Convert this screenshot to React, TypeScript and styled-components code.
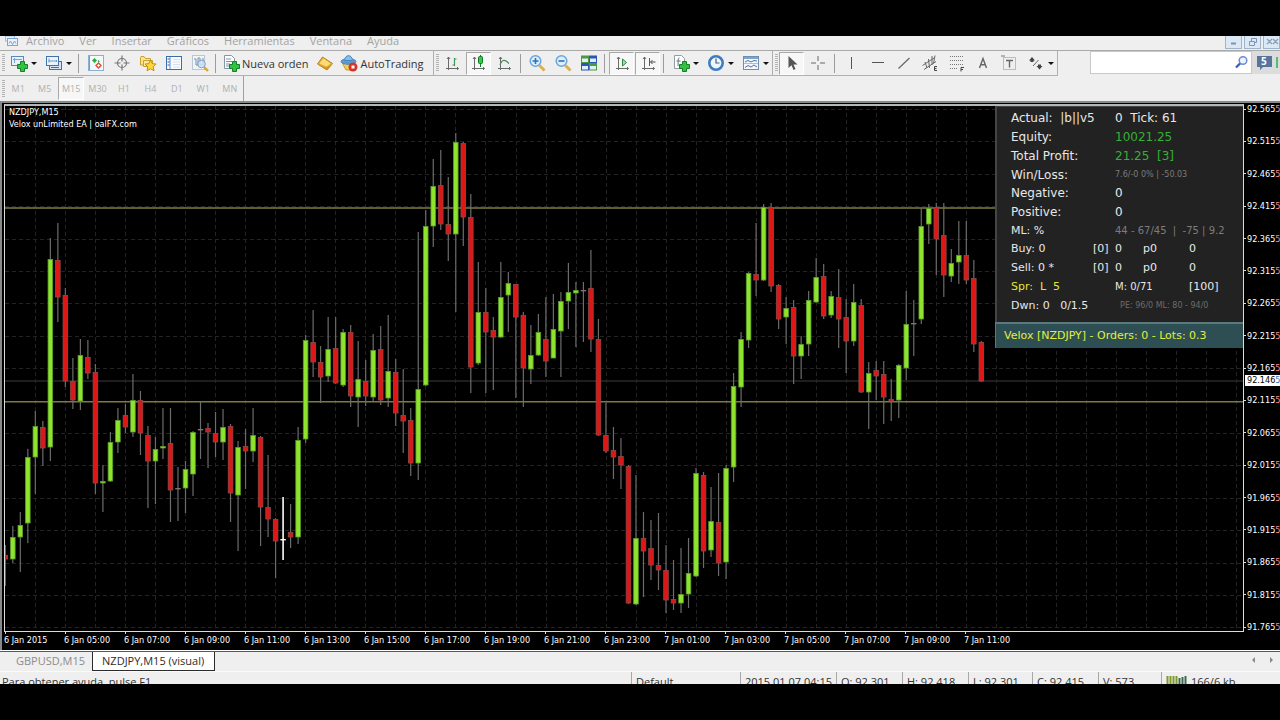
import React from "react";
import styled, { createGlobalStyle, css } from "styled-components";

const ui = '"Open Sans", "Noto Sans", sans-serif';
const tahoma = '"DejaVu Sans Condensed", "Open Sans", sans-serif';
const verdana = '"DejaVu Sans", sans-serif';

const GlobalStyle = createGlobalStyle`
  * { box-sizing: border-box; }
  body { margin: 0; background: #000; font-family: ${ui}; font-size: 11px; color: #333; }
  button { font: inherit; color: inherit; }
`;

const Screen = styled.div`
  padding: 36px 0;
  background: #000;
  min-height: 100vh;
  overflow: hidden;
`;

const Terminal = styled.main`
  display: flex;
  flex-direction: column;
  background: #efefef;
`;

/* ---------- menu ---------- */

const MenuBar = styled.header`
  display: flex;
  align-items: flex-start;
  justify-content: space-between;
  height: 15px;
  border-bottom: 1px solid #a9a9a9;
`;

const MenuList = styled.nav`
  display: flex;
  gap: 15px;
  padding-left: 4px;
`;

const MenuLink = styled.a`
  color: #a3a3a3;
  line-height: 10px;
  text-decoration: none;
`;

const MenuLogo = styled.svg`
  width: 16px;
  height: 12px;
  margin-right: -9px;
`;

const WindowButtons = styled.div`
  display: flex;
  gap: 2px;
`;

const WindowButton = styled.button`
  display: flex;
  justify-content: center;
  width: 17px;
  height: 13px;
  padding: 0;
  border: 1px solid #9db4cc;
  border-top: 0;
  background: #dbe8f5;
`;

/* ---------- toolbars ---------- */

const Toolbar = styled.div`
  display: flex;
  height: 25px;
`;

const ToolGroup = styled.div<{ $min: number; $packed?: boolean }>`
  display: flex;
  align-items: center;
  justify-content: ${(p) => (p.$packed ? "flex-start" : "space-between")};
  gap: ${(p) => (p.$packed ? 1 : 0)}px;
  min-width: ${(p) => p.$min}px;
  height: 25px;
  padding: 0 0 0 2px;
  border-right: 1px solid #b0b0b0;
  border-bottom: 1px solid #b0b0b0;
`;

const Grip = styled.span`
  width: 3px;
  height: 18px;
  background: repeating-linear-gradient(#b4b4b4 0 1px, #efefef 1px 2px);
`;

const Divider = styled.span`
  width: 1px;
  height: 19px;
  margin: 0 3px 0 2px;
  background: #9c9c9c;
`;

const pressedLook = css`
  border-color: #a8a8a8 #fff #fff #a8a8a8;
  background: #f7f7f7;
`;

const ToolButton = styled.button<{ $pressed?: boolean }>`
  display: flex;
  align-items: center;
  justify-content: center;
  width: 25px;
  height: 23px;
  padding: 0;
  border: 1px solid transparent;
  background: transparent;
  ${(p) => p.$pressed && pressedLook}
`;

const DropButton = styled(ToolButton)`
  width: 34px;
  justify-content: flex-start;
  gap: 3px;
  padding-left: 3px;
`;

const Caret = styled.span`
  border: 3px solid transparent;
  border-top-color: #111;
  border-bottom: 0;
`;

const TextButton = styled(ToolButton)`
  width: auto;
  gap: 2px;
  padding: 0 2px 0 1px;
  white-space: nowrap;
`;

const IconSvg = styled.svg`
  width: 18px;
  height: 18px;
  flex: none;
`;

const SearchArea = styled.form`
  display: flex;
  margin-left: auto;
  height: 24px;
`;

const SearchBox = styled.label`
  display: flex;
  align-items: center;
  width: 162px;
  height: 23px;
  border: 1px solid #c9c9c9;
  background: #fff;
`;

const SearchInput = styled.input`
  flex: 1;
  min-width: 0;
  border: 0;
  outline: 0;
  background: transparent;
  font: 11px ${ui};
`;

const ChatButton = styled.button`
  width: 28px;
  height: 23px;
  padding: 0;
  border: 0;
  background: #dcdcdc;
`;

const PeriodBar = styled.div`
  display: flex;
  width: 244px;
  height: 25px;
  align-items: center;
  padding-left: 2px;
  border-right: 1px solid #a0a0a0;
`;

const PeriodButton = styled.button<{ $pressed?: boolean }>`
  flex: 1;
  height: 23px;
  padding: 0;
  border: 1px solid transparent;
  background: transparent;
  color: #b0b0b0;
  font-size: 9px;
  ${(p) => p.$pressed && pressedLook}
`;

/* ---------- chart ---------- */

const ChartWindow = styled.section`
  padding: 1px 0 0 2px;
  border: solid #858989;
  border-width: 2px 0 0 2px;
  background: #000;
  color: #fff;
  font-family: ${tahoma};
  font-size: 9px;
  overflow: hidden;
`;

const ChartBody = styled.div`
  display: flex;
`;

const Plot = styled.div`
  position: relative;
  flex: 1;
  min-width: 0;
  border: 1px solid #dcdcdc;
  border-top: 2px solid #b4b8b8;
  overflow: hidden;
`;

const PlotSvg = styled.svg`
  display: block;
  width: 100%;
  height: 525px;
`;

const ChartTitle = styled.div`
  position: absolute;
  top: 0;
  left: 4px;
  line-height: 12px;
`;

const PriceAxis = styled.div`
  position: relative;
  display: flex;
  flex-direction: column;
  justify-content: space-between;
  width: 36px;
`;

const Price = styled.span`
  display: flex;
  align-items: center;
  line-height: 10px;
  white-space: nowrap;
  &::before {
    content: "";
    flex: none;
    width: 2px;
    height: 1px;
    margin-right: 1px;
    background: #ddd;
  }
`;

const LastDigit = styled.span`
  color: #ff8c8c;
`;

const CurrentPrice = styled.span`
  position: absolute;
  top: 271px;
  left: 1px;
  width: 35px;
  padding-left: 2px;
  background: #fff;
  color: #000;
  line-height: 11px;
  white-space: nowrap;
`;

const CurrentDigit = styled.span`
  color: #4a6fb0;
`;

const TimeAxis = styled.div`
  display: flex;
  height: 18px;
`;

const TimeLabel = styled.span`
  flex: none;
  width: 60px;
  line-height: 12px;
  white-space: nowrap;
  &::before {
    content: "";
    display: block;
    width: 1px;
    height: 2px;
    margin-left: 1px;
    background: #ddd;
  }
`;

/* ---------- advisor panel ---------- */

const Advisor = styled.aside`
  position: absolute;
  top: 0;
  right: 0;
  width: 248px;
  font-family: ${verdana};
  color: #e8e8e8;
`;

const Stats = styled.div`
  display: grid;
  grid-template-rows: repeat(11, 1fr);
  height: 216px;
  padding: 2px 0 7px 14px;
  border: solid #454545;
  border-width: 1px 0 0 2px;
  background: #222;
`;

const StatRow = styled.div<{ $small?: boolean }>`
  display: grid;
  grid-template-columns: 82px 22px 28px 46px 1fr;
  align-items: center;
  font-size: ${(p) => (p.$small ? 11 : 12)}px;
  line-height: 14px;
  white-space: pre;
`;

const Wide = styled.span<{ $tone?: string; $size?: number }>`
  grid-column: 3 / -1;
  color: ${(p) => p.$tone || "inherit"};
  font-size: ${(p) => (p.$size ? `${p.$size}px` : "inherit")};
`;

const Margin = styled.span`
  grid-column: 3 / 5;
  font-size: 10px;
`;

const Spread = styled.span`
  grid-column: 1 / 3;
  color: #e6e62e;
`;

const Summary = styled.div`
  height: 26px;
  padding-left: 8px;
  border: solid #5b7a7e;
  border-width: 2px 0 0 1px;
  background: #2d4e53;
  color: #e3ee3c;
  font-size: 11px;
  line-height: 24px;
  white-space: nowrap;
`;

/* ---------- tabs and status ---------- */

const Tabs = styled.nav`
  display: flex;
  align-items: flex-start;
  height: 22px;
  border-top: 1px solid #fff;
  border-bottom: 1px solid #fafafa;
  box-shadow: inset 0 1px 0 #5a5a5a;
  padding-left: 1px;
`;

const Tab = styled.button<{ $active?: boolean }>`
  height: 19px;
  margin-top: 1px;
  padding: 0 10px 0 9px;
  border: solid ${(p) => (p.$active ? "#2b2b2b" : "transparent")};
  border-width: 0 1px 1px 1px;
  background: ${(p) => (p.$active ? "#fff" : "transparent")};
  color: ${(p) => (p.$active ? "#2b2b2b" : "#8c8c8c")};
  line-height: 16px;
  &:first-child { padding: 0 6px 0 14px; }
`;

const TabScroll = styled.div`
  display: flex;
  gap: 15px;
  margin: 6px 7px 0 auto;
`;

const Arrow = styled.button<{ $dir: "left" | "right" }>`
  width: 0;
  height: 0;
  padding: 0;
  border: 3px solid transparent;
  border-${(p) => (p.$dir === "left" ? "right" : "left")}-color: #8a8a8a;
  border-${(p) => p.$dir}-width: 0;
  background: none;
`;

const StatusBar = styled.footer`
  display: flex;
  height: 12px;
  overflow: hidden;
  line-height: 20px;
  white-space: nowrap;
`;

const Hint = styled.span`
  flex: 1;
  padding-left: 2px;
`;

const Cell = styled.span<{ $w: number }>`
  width: ${(p) => p.$w}px;
  height: 20px;
  padding-left: 4px;
  border-left: 1px solid #a8a8a8;
`;

const Traffic = styled.svg`
  width: 22px;
  height: 10px;
  margin: 4px 3px 0 0;
  vertical-align: top;
`;

/* ---------- icons ---------- */

const Plus = () => (
  <path
    transform="translate(7 7)"
    d="M3.500 0.500h4v3h3v4h-3v3h-4v-3h-3v-4h3z"
    fill="#2fc43a"
    stroke="#13802a"
  />
);

const Axes = () => (
  <path
    d="M5.500 3v13M3 14.500H15.500M4 5l1.500-2L7 5M14 13l1.500 1.500L14 16"
    fill="none"
    stroke="#6a6a6a"
  />
);

const icons: Record<string, React.ReactNode> = {
  newChart: (
    <>
      <rect x="1.500" y="2.500" width="12" height="9" fill="#e6f1fb" stroke="#5a8ab8" />
      <path d="M3 5.500h9M4.500 4v5" stroke="#7ba3cc" />
      <Plus />
    </>
  ),
  profiles: (
    <>
      <rect x="4.500" y="7.500" width="12" height="8" fill="#d4e5f6" stroke="#3f74aa" />
      <rect x="1.500" y="2.500" width="12" height="9" fill="#eaf3fc" stroke="#3f74aa" />
      <path d="M3.500 7h8M4 4.500v4M11 6l1 1-1 1" stroke="#6c98c4" fill="none" />
      <path d="M6 13.500h8" stroke="#3f74aa" />
    </>
  ),
  market: (
    <>
      <rect x="1.500" y="1.500" width="15" height="15" fill="#f4f9ff" stroke="#8ab0d8" />
      <path d="M2.500 2v14" stroke="#6b9bd0" />
      <path d="M7.500 4l2.500 2.500-2.500 2.500L5 6.500z" fill="#2cae3c" />
      <path d="M11.500 9l2.500 2.500-2.500 2.500L9 11.500z" fill="#fff" stroke="#e2482c" strokeWidth="1.300" />
      <path d="M11 6l2 1.200L11 8.500z" fill="#2cae3c" />
    </>
  ),
  target: (
    <g fill="none" stroke="#777" strokeWidth="1.200">
      <circle cx="9" cy="9" r="4.500" />
      <path d="M9 1.500v6M9 10.500v6M1.500 9h6M10.500 9h6" />
    </g>
  ),
  navigator: (
    <>
      <path d="M1.500 3.500V11h10V4.500h-5l-1.500-2h-3z" fill="#fbe48a" stroke="#c9a032" />
      <path d="M4.500 6.500h9v6h-9z" fill="#fdeb9c" stroke="#c9a032" />
      <path d="M11.500 6l1.700 3.600 3.900.5-2.900 2.700.8 3.900-3.500-1.900-3.500 1.900.8-3.900L6 10.100l3.900-.5z" fill="#ffd83a" stroke="#c08f1c" />
    </>
  ),
  terminal: (
    <>
      <rect x="1.500" y="2.500" width="15" height="13" fill="#f8fbff" stroke="#3a6ea8" />
      <path d="M5 3v12" stroke="#a9c5ea" strokeWidth="2" />
      <path d="M2.500 5h2M2.500 8h2M2.500 11h2" stroke="#2f5b96" />
      <path d="M8 5.500h7M8 8h7M8 10.500h7M8 13h7" stroke="#d3e1f2" />
    </>
  ),
  tester: (
    <>
      <rect x="1.500" y="1.500" width="12" height="14" fill="#f4f4f4" stroke="#b9c8d5" />
      <path d="M3 5h2v6h2V4h2v7h3V4" fill="none" stroke="#7292b4" />
      <path d="M13 13l4 4" stroke="#d8a33b" strokeWidth="2.400" />
      <circle cx="10.500" cy="10" r="3.800" fill="#cfe5f6" fillOpacity=".8" stroke="#7aa2c6" />
    </>
  ),
  order: (
    <>
      <path d="M2.500 1.500h7l3 3v10h-10z" fill="#fff" stroke="#8695a3" />
      <path d="M4 5h5M4 7.500h6M4 10h4M4 12h3" stroke="#7d8f9f" />
      <Plus />
    </>
  ),
  gold: (
    <>
      <path d="M1.500 10l5-7 10 6.500-5.500 6.500z" fill="#e9b12e" stroke="#b9821e" />
      <path d="M3.500 9.500l4-5L14.500 9.500 10.500 12.500z" fill="#fbdc76" />
      <path d="M1.500 10l9 3.500 6-4L11 16z" fill="#cf9323" />
    </>
  ),
  auto: (
    <>
      <path d="M2 8.500h13l-4 7.500H6z" fill="#f3cf58" stroke="#c79b33" />
      <ellipse cx="8.500" cy="7.500" rx="7.500" ry="2.800" fill="#5b9bd5" stroke="#4a87c0" />
      <path d="M4.500 6.500C5 0 12 0 12.500 6.500z" fill="#86bce8" stroke="#4a87c0" />
      <circle cx="13" cy="13" r="4.500" fill="#d3352a" />
      <rect x="11.500" y="11.500" width="3" height="3" fill="#fff" />
    </>
  ),
  bars: (
    <>
      <Axes />
      <path d="M11.500 4v8M11.500 5h2M9.500 11h2" stroke="#3f9a52" strokeWidth="1.200" fill="none" />
    </>
  ),
  candle: (
    <>
      <Axes />
      <path d="M11.500 1v12" stroke="#0e7a24" />
      <rect x="9.500" y="2.500" width="4" height="7" rx="1" fill="#37c94a" stroke="#0e7a24" />
    </>
  ),
  line: (
    <>
      <Axes />
      <path d="M5 11c2-6 5-6 9-1.500" stroke="#4d8d5d" strokeWidth="1.200" fill="none" />
    </>
  ),
  zoomIn: (
    <>
      <path d="M11.500 11.500l5 5" stroke="#dcb14c" strokeWidth="3" />
      <circle cx="7.500" cy="7" r="5.300" fill="#dceefb" stroke="#6ba5da" strokeWidth="1.500" />
      <path d="M4.500 7h6M7.500 4v6" stroke="#2b72b8" strokeWidth="1.600" />
    </>
  ),
  zoomOut: (
    <>
      <path d="M11.500 11.500l5 5" stroke="#dcb14c" strokeWidth="3" />
      <circle cx="7.500" cy="7" r="5.300" fill="#dceefb" stroke="#6ba5da" strokeWidth="1.500" />
      <path d="M4.500 7h6" stroke="#2b72b8" strokeWidth="1.600" />
    </>
  ),
  tile: (
    <>
      <rect x="1" y="1.500" width="8" height="7.500" fill="#4b9a3c" />
      <rect x="9" y="1.500" width="8" height="7.500" fill="#2a58b4" />
      <rect x="1" y="9" width="8" height="7.500" fill="#2a58b4" />
      <rect x="9" y="9" width="8" height="7.500" fill="#4b9a3c" />
      <path d="M2 4.500h6V8H2zM10 4.500h6V8h-6zM2 12h6v3.500H2zM10 12h6v3.500h-6z" fill="#dfeefa" />
    </>
  ),
  scroll: (
    <>
      <Axes />
      <path d="M9.500 5l4 3.500-4 3.500z" fill="#a9dcb2" stroke="#2b8a3e" />
    </>
  ),
  shift: (
    <>
      <Axes />
      <path d="M10.500 4v8" stroke="#5d5d5d" />
      <path d="M11.500 8h5M13.500 6l-2 2 2 2" stroke="#4d4d4d" fill="none" />
    </>
  ),
  indicators: (
    <>
      <path d="M2.500 1.500h7l3 3v10h-10z" fill="#fff" stroke="#8f9f9f" />
      <path d="M7.500 4c-2 0-1 3-1.500 8M4.500 7h4" stroke="#5d6d7d" fill="none" />
      <Plus />
    </>
  ),
  clock: (
    <>
      <circle cx="9" cy="9" r="6.700" fill="#eef6fd" stroke="#3f7dbf" strokeWidth="2.600" />
      <path d="M9 4.500V9h3.500" stroke="#44607c" fill="none" strokeWidth="1.200" />
    </>
  ),
  template: (
    <>
      <rect x="1.500" y="2.500" width="15" height="13" fill="#f2f8fe" stroke="#6d8fae" />
      <path d="M2 4h14" stroke="#7ba6d2" strokeWidth="2" />
      <path d="M2 9.500h14" stroke="#a9bfd4" />
      <path d="M3 8l3-1.500 3 1.500 3-1.500 3 .5M3 13.500l3-2 3 1.500 3-2 3 2" stroke="#56728e" fill="none" />
    </>
  ),
  pointer: <path d="M5.500 2v12l3-2.700 2 4.700 2-.9-2-4.600h4z" fill="#555" />,
  cross: <path d="M9 2v5M9 11v5M2 9h5M11 9h5" stroke="#666" />,
  vline: <path d="M8.500 3v12" stroke="#555" />,
  hline: <path d="M3 8.500h12" stroke="#555" />,
  trend: <path d="M3.500 14.500l11-10.500" stroke="#666" strokeWidth="1.200" />,
  channel: (
    <>
      <path d="M1.500 11.500L13 4M3 15.500L15 7.500M4 8l2 6M7.500 5l1 9M11 2l0 9M14 1.500l-1.500 8" stroke="#666" fill="none" />
      <path d="M16 12.500h-2.500v4H16M13.500 14.500h2" stroke="#444" fill="none" />
    </>
  ),
  fibo: (
    <>
      <path d="M2 2.500h14M2 6.500h14M2 10.500h14M2 14.500h8" stroke="#777" strokeDasharray="1 1" />
      <path d="M16 13.500h-3v4M13 15.500h2" stroke="#444" fill="none" />
    </>
  ),
  text: <path d="M5.500 14L9 4.500l3.500 9.500M6.500 10.800h5" stroke="#666" strokeWidth="1.400" fill="none" />,
  label: (
    <>
      <rect x="3.500" y="3.500" width="12" height="12" fill="none" stroke="#888" strokeDasharray="1 1" />
      <path d="M6 6.500h7M9.500 6.500v7" stroke="#666" strokeWidth="1.400" />
      <path d="M1 2h4" stroke="#777" />
    </>
  ),
  arrows: (
    <>
      <path d="M5 3l3 3.500H6.500V8h-3V6.500H2z" fill="#444" />
      <path d="M12.500 15.500l-3-3.500H11v-1.500h3V12h1.500z" fill="#444" />
      <path d="M6 12l5.500-6" stroke="#666" />
    </>
  ),
};

const Icon = ({ name }: { name: string }) => (
  <IconSvg viewBox="0 0 18 18" aria-hidden="true">
    {icons[name]}
  </IconSvg>
);

type ToolProps = { name: string; label: string; pressed?: boolean };

const Tool = ({ name, label, pressed }: ToolProps) => (
  <ToolButton type="button" aria-label={label} $pressed={pressed}>
    <Icon name={name} />
  </ToolButton>
);

const DropTool = ({ name, label }: ToolProps) => (
  <DropButton type="button" aria-label={label}>
    <Icon name={name} />
    <Caret />
  </DropButton>
);

/* ---------- data ---------- */

type Candle = [kind: string, high: number, top: number, bottom: number, low: number];

const TOP = 106;
const STEP = 7.508;

// Candles from left to right: u = up, d = down, n = unchanged, w = marked bar.
const candles: Candle[] = [
  ["d", 545, 555, 559, 586], ["u", 526, 537, 559, 563], ["u", 512, 525, 537, 572], ["u", 449, 457, 523, 543],
  ["u", 411, 426, 457, 494], ["d", 421, 427, 448, 466], ["u", 238, 259, 447, 461], ["d", 223, 260, 297, 322],
  ["d", 288, 295, 381, 387], ["d", 358, 381, 400, 409], ["u", 339, 355, 401, 410], ["d", 340, 357, 373, 379],
  ["d", 364, 372, 483, 494], ["u", 465, 481, 483, 512], ["u", 432, 442, 481, 482], ["u", 408, 420, 442, 453],
  ["d", 404, 415, 427, 433], ["u", 374, 400, 432, 437], ["d", 391, 400, 433, 455], ["d", 426, 435, 461, 508],
  ["u", 437, 449, 461, 504], ["u", 408, 446, 448, 459], ["d", 408, 443, 490, 522], ["n", 467, 488, 489, 521],
  ["u", 461, 469, 488, 513], ["u", 431, 432, 474, 496], ["n", 402, 429, 430, 459], ["d", 423, 428, 432, 468],
  ["d", 412, 433, 442, 457], ["u", 409, 427, 442, 460], ["d", 424, 426, 493, 522], ["u", 441, 447, 495, 551],
  ["d", 429, 446, 451, 489], ["u", 408, 435, 451, 462], ["d", 436, 437, 507, 546], ["d", 455, 507, 519, 537],
  ["d", 518, 519, 541, 578], ["w", 497, 539, 540, 560], ["d", 504, 532, 537, 548], ["u", 427, 440, 537, 544],
  ["u", 335, 340, 439, 443], ["d", 310, 342, 362, 377], ["d", 346, 362, 377, 403], ["u", 317, 349, 376, 382],
  ["d", 317, 348, 383, 384], ["u", 329, 332, 385, 387], ["d", 325, 332, 396, 407], ["u", 341, 379, 397, 427],
  ["d", 360, 381, 396, 406], ["u", 334, 350, 397, 401], ["d", 326, 349, 400, 405], ["u", 315, 371, 398, 407],
  ["d", 359, 372, 413, 426], ["d", 369, 415, 421, 453], ["d", 408, 420, 463, 476], ["u", 232, 389, 463, 480],
  ["u", 210, 226, 385, 386], ["u", 159, 186, 226, 247], ["d", 150, 185, 224, 230], ["d", 177, 224, 234, 261],
  ["u", 133, 142, 234, 312], ["d", 142, 143, 217, 246], ["d", 194, 217, 367, 393], ["u", 262, 312, 363, 365],
  ["d", 288, 312, 332, 393], ["d", 317, 330, 337, 390], ["u", 262, 297, 337, 338], ["u", 272, 283, 295, 332],
  ["d", 284, 284, 317, 398], ["d", 312, 315, 368, 407], ["u", 325, 355, 369, 384], ["u", 314, 332, 355, 356],
  ["d", 297, 339, 361, 377], ["u", 294, 329, 358, 358], ["u", 292, 301, 331, 377], ["u", 263, 292, 301, 329],
  ["u", 282, 290, 293, 347], ["n", 282, 290, 291, 342], ["d", 250, 288, 339, 352], ["d", 319, 339, 435, 436],
  ["d", 403, 435, 451, 453], ["d", 427, 450, 457, 479], ["d", 438, 456, 465, 489], ["d", 465, 466, 603, 604],
  ["u", 475, 538, 604, 605], ["d", 512, 538, 551, 597], ["d", 520, 548, 565, 580], ["d", 513, 565, 570, 590],
  ["d", 545, 570, 600, 613], ["d", 560, 599, 603, 610], ["u", 548, 594, 603, 613], ["u", 538, 573, 594, 608],
  ["u", 468, 473, 576, 577], ["d", 472, 475, 551, 568], ["u", 487, 521, 550, 557], ["d", 473, 522, 563, 576],
  ["u", 465, 468, 562, 579], ["u", 373, 386, 467, 482], ["u", 332, 339, 387, 407], ["u", 272, 273, 340, 348],
  ["d", 223, 274, 280, 296], ["u", 204, 207, 280, 281], ["d", 203, 207, 286, 292], ["d", 284, 285, 319, 329],
  ["u", 297, 308, 317, 344], ["d", 300, 307, 356, 384], ["u", 336, 344, 356, 379], ["u", 291, 300, 344, 356],
  ["u", 258, 277, 302, 303], ["d", 264, 276, 316, 319], ["u", 291, 296, 315, 318], ["d", 269, 297, 319, 348],
  ["d", 299, 317, 341, 373], ["u", 284, 302, 341, 346], ["d", 299, 305, 392, 393], ["u", 362, 373, 392, 429],
  ["d", 361, 370, 376, 400], ["d", 361, 374, 397, 424], ["d", 379, 399, 401, 421], ["u", 364, 365, 400, 418],
  ["u", 291, 324, 368, 380], ["n", 300, 323, 324, 356], ["u", 208, 226, 319, 324], ["u", 204, 208, 224, 244],
  ["d", 203, 207, 239, 275], ["d", 203, 235, 275, 297], ["u", 249, 263, 276, 282], ["u", 221, 255, 262, 284],
  ["d", 221, 255, 280, 284], ["d", 260, 278, 344, 352], ["d", 341, 342, 381, 382],
];

const fills: Record<string, string> = { u: "#8ee42c", d: "#de1616", n: "#777", w: "#fff" };
const edges: Record<string, string> = { u: "#5c9a2c", d: "#8d4a4a", n: "#777", w: "#fff" };

const gridRows = Array.from({ length: 17 }, (_, i) => Math.round(3 + i * 32.4));
const gridCols = Array.from({ length: 80 }, (_, i) => Math.round((i + 1) * 30.03));
const prices = Array.from({ length: 17 }, (_, i) => (92.565 - i * 0.05).toFixed(3));
const times = [
  "6 Jan 2015", "6 Jan 05:00", "6 Jan 07:00", "6 Jan 09:00", "6 Jan 11:00", "6 Jan 13:00", "6 Jan 15:00",
  "6 Jan 17:00", "6 Jan 19:00", "6 Jan 21:00", "6 Jan 23:00", "7 Jan 01:00", "7 Jan 03:00", "7 Jan 05:00",
  "7 Jan 07:00", "7 Jan 09:00", "7 Jan 11:00",
];

const Candles = () => (
  <PlotSvg role="img" aria-label="NZDJPY M15">
    <g stroke="#232323" strokeDasharray="4 3">
      {gridRows.map((y) => (
        <line key={y} x1="0" x2="100%" y1={y + 0.5} y2={y + 0.5} />
      ))}
      {gridCols.map((x) => (
        <line key={x} x1={x + 0.5} x2={x + 0.5} y1="0" y2="100%" />
      ))}
    </g>
    <line x1="0" x2="100%" y1="275" y2="275" stroke="#282828" strokeWidth="1.400" />
    <g stroke="#7c7c3c" strokeWidth="1.400">
      <line x1="0" x2="100%" y1="102" y2="102" />
      <line x1="0" x2="100%" y1="295.700" y2="295.700" />
    </g>
    {candles.map(([kind, high, top, bottom, low], i) => {
      const x = i * STEP + 0.3;
      return (
        <g key={i}>
          <line x1={x} x2={x} y1={high - TOP} y2={low - TOP} stroke={kind === "w" ? "#eee" : "#6c6c6c"} strokeWidth={kind === "w" ? 1.7 : 1.2} />
          <rect
            x={x - 2.3}
            y={top - TOP + 0.4}
            width="4.600"
            height={Math.max(bottom - top - 0.4, 0.6)}
            fill={fills[kind]}
            stroke={edges[kind]}
            strokeWidth=".8"
          />
        </g>
      );
    })}
  </PlotSvg>
);

const AdvisorPanel = () => (
  <Advisor>
    <Stats>
      <StatRow><span>{"Actual:  |b||v5"}</span><Wide>{"0  Tick: 61"}</Wide></StatRow>
      <StatRow><span>Equity:</span><Wide $tone="#35b135">10021.25</Wide></StatRow>
      <StatRow><span>Total Profit:</span><Wide $tone="#35b135">{"21.25  [3]"}</Wide></StatRow>
      <StatRow><span>Win/Loss:</span><Wide $tone="#7c7c7c" $size={8}>7.6/-0 0% | -50.03</Wide></StatRow>
      <StatRow><span>Negative:</span><Wide>0</Wide></StatRow>
      <StatRow><span>Positive:</span><Wide>0</Wide></StatRow>
      <StatRow $small><span>ML: %</span><Wide $tone="#7c7c7c" $size={10}>{"44 - 67/45  |  -75 | 9.2"}</Wide></StatRow>
      <StatRow $small><span>Buy: 0</span><span>[0]</span><span>0</span><span>p0</span><span>0</span></StatRow>
      <StatRow $small><span>Sell: 0 *</span><span>[0]</span><span>0</span><span>p0</span><span>0</span></StatRow>
      <StatRow $small><Spread>{"Spr:  L  5"}</Spread><Margin>M: 0/71</Margin><span>[100]</span></StatRow>
      <StatRow $small><span>{"Dwn: 0   0/1.5"}</span><Wide $tone="#6c6c6c" $size={8}>{"  PE: 96/0 ML: 80 - 94/0"}</Wide></StatRow>
    </Stats>
    <Summary>Velox [NZDJPY] - Orders: 0 - Lots: 0.3</Summary>
  </Advisor>
);

export default function App() {
  return (
    <Screen>
      <GlobalStyle />
      <Terminal>
        <MenuBar>
          <MenuList>
            <MenuLogo viewBox="0 0 16 12" aria-hidden="true">
              <rect x="1.500" y="0" width="9" height="5" fill="#eaf3fb" stroke="#a3bfdb" />
              <rect x="3.500" y="2.500" width="10" height="7" fill="#eaf3fb" stroke="#7ba6cf" />
              <path d="M5 7.500l1.500-2.500 2 3.500 2-3.500 1.500 2.500" fill="none" stroke="#7ba6cf" />
            </MenuLogo>
            {["Archivo", "Ver", "Insertar", "Gráficos", "Herramientas", "Ventana", "Ayuda"].map((m) => (
              <MenuLink key={m} href="#">{m}</MenuLink>
            ))}
          </MenuList>
          <WindowButtons>
            <WindowButton type="button" aria-label="Minimizar">
              <svg width="15" height="12"><path d="M5 7.500h5" stroke="#8095ad" strokeWidth="2" /></svg>
            </WindowButton>
            <WindowButton type="button" aria-label="Restaurar">
              <svg width="15" height="12"><path d="M4.500 5.500h5v4h-5zM6.500 5V2.500h5v4H10" fill="none" stroke="#8095ad" /></svg>
            </WindowButton>
            <WindowButton type="button" aria-label="Cerrar">
              <svg width="15" height="12"><path d="M3 3l5 5M8 3L3 8M9 3l5 5M14 3L9 8" stroke="#8a9fb6" strokeWidth="1.300" /></svg>
            </WindowButton>
          </WindowButtons>
        </MenuBar>

        <Toolbar>
          <ToolGroup $min={434} $packed>
            <Grip />
            <DropTool name="newChart" label="Nuevo gráfico" />
            <DropTool name="profiles" label="Perfiles" />
            <Divider />
            <Tool name="market" label="Observación del mercado" />
            <Tool name="target" label="Ventana de datos" />
            <Tool name="navigator" label="Navegador" />
            <Tool name="terminal" label="Terminal" />
            <Tool name="tester" label="Probador de estrategias" />
            <Divider />
            <TextButton type="button"><Icon name="order" />Nueva orden</TextButton>
            <Tool name="gold" label="MetaEditor" />
            <TextButton type="button"><Icon name="auto" />AutoTrading</TextButton>
          </ToolGroup>
          <ToolGroup $min={339}>
            <Grip />
            <Tool name="bars" label="Gráfico de barras" />
            <Tool name="candle" label="Velas japonesas" pressed />
            <Tool name="line" label="Gráfico de línea" />
            <Divider />
            <Tool name="zoomIn" label="Acercar" />
            <Tool name="zoomOut" label="Alejar" />
            <Tool name="tile" label="Mosaico" />
            <Divider />
            <Tool name="scroll" label="Desplazamiento automático" pressed />
            <Tool name="shift" label="Desplazar gráfico" pressed />
            <Divider />
            <DropTool name="indicators" label="Indicadores" />
            <DropTool name="clock" label="Períodos" />
            <DropTool name="template" label="Plantillas" />
          </ToolGroup>
          <ToolGroup $min={285}>
            <Grip />
            <Tool name="pointer" label="Cursor" pressed />
            <Tool name="cross" label="Retículo" />
            <Divider />
            <Tool name="vline" label="Línea vertical" />
            <Tool name="hline" label="Línea horizontal" />
            <Tool name="trend" label="Línea de tendencia" />
            <Tool name="channel" label="Canal equidistante" />
            <Tool name="fibo" label="Fibonacci" />
            <Tool name="text" label="Texto" />
            <Tool name="label" label="Etiqueta" />
            <DropTool name="arrows" label="Flechas" />
          </ToolGroup>
          <SearchArea>
            <SearchBox>
              <SearchInput type="text" aria-label="Buscar" />
              <IconSvg viewBox="0 0 18 18" aria-hidden="true">
                <circle cx="10" cy="6.500" r="3.800" fill="#eef4ff" stroke="#6d8bd2" strokeWidth="1.500" />
                <path d="M7 9.500L3 13.500" stroke="#3b5fc0" strokeWidth="2.400" />
              </IconSvg>
            </SearchBox>
            <ChatButton type="button" aria-label="Mensajes: 5">
              <svg width="28" height="23" aria-hidden="true">
                <path d="M5 5h15v11h-9l-3 3v-3H5z" fill="#56749c" />
                <text x="9" y="14" fill="#fff" fontSize="10" fontWeight="700" fontFamily="Open Sans">5</text>
                <path d="M25 6v11" stroke="#4fc06c" strokeWidth="2" />
              </svg>
            </ChatButton>
          </SearchArea>
        </Toolbar>

        <PeriodBar>
          <Grip />
          {["M1", "M5", "M15", "M30", "H1", "H4", "D1", "W1", "MN"].map((p) => (
            <PeriodButton key={p} type="button" $pressed={p === "M15"}>{p}</PeriodButton>
          ))}
        </PeriodBar>

        <ChartWindow>
          <ChartBody>
            <Plot>
              <Candles />
              <ChartTitle>
                NZDJPY,M15
                <br />
                Velox unLimited EA | oalFX.com
              </ChartTitle>
              <AdvisorPanel />
            </Plot>
            <PriceAxis>
              {prices.map((p) => (
                <Price key={p}>{p}<LastDigit>5</LastDigit></Price>
              ))}
              <CurrentPrice>92.146<CurrentDigit>5</CurrentDigit></CurrentPrice>
            </PriceAxis>
          </ChartBody>
          <TimeAxis>
            {times.map((t) => (
              <TimeLabel key={t}>{t}</TimeLabel>
            ))}
          </TimeAxis>
        </ChartWindow>

        <Tabs>
          <Tab type="button">GBPUSD,M15</Tab>
          <Tab type="button" $active>NZDJPY,M15 (visual)</Tab>
          <TabScroll>
            <Arrow type="button" $dir="left" aria-label="Anterior" />
            <Arrow type="button" $dir="right" aria-label="Siguiente" />
          </TabScroll>
        </Tabs>

        <StatusBar>
          <Hint>Para obtener ayuda, pulse F1</Hint>
          <Cell $w={109}>Default</Cell>
          <Cell $w={96}>2015.01.07 04:15</Cell>
          <Cell $w={66}>O: 92.301</Cell>
          <Cell $w={66}>H: 92.418</Cell>
          <Cell $w={64}>L: 92.301</Cell>
          <Cell $w={66}>C: 92.415</Cell>
          <Cell $w={63}>V: 573</Cell>
          <Cell $w={119}>
            <Traffic viewBox="0 0 22 10" aria-hidden="true">
              <path d="M1.500 0v10M4.500 0v10M7.500 0v10M10.500 0v10" stroke="#7d9a2a" strokeWidth="2" />
              <path d="M13.500 2v8M16.500 1v9M19.500 0v10" stroke="#3c6a50" strokeWidth="2" />
            </Traffic>
            166/6 kb
          </Cell>
        </StatusBar>
      </Terminal>
    </Screen>
  );
}
